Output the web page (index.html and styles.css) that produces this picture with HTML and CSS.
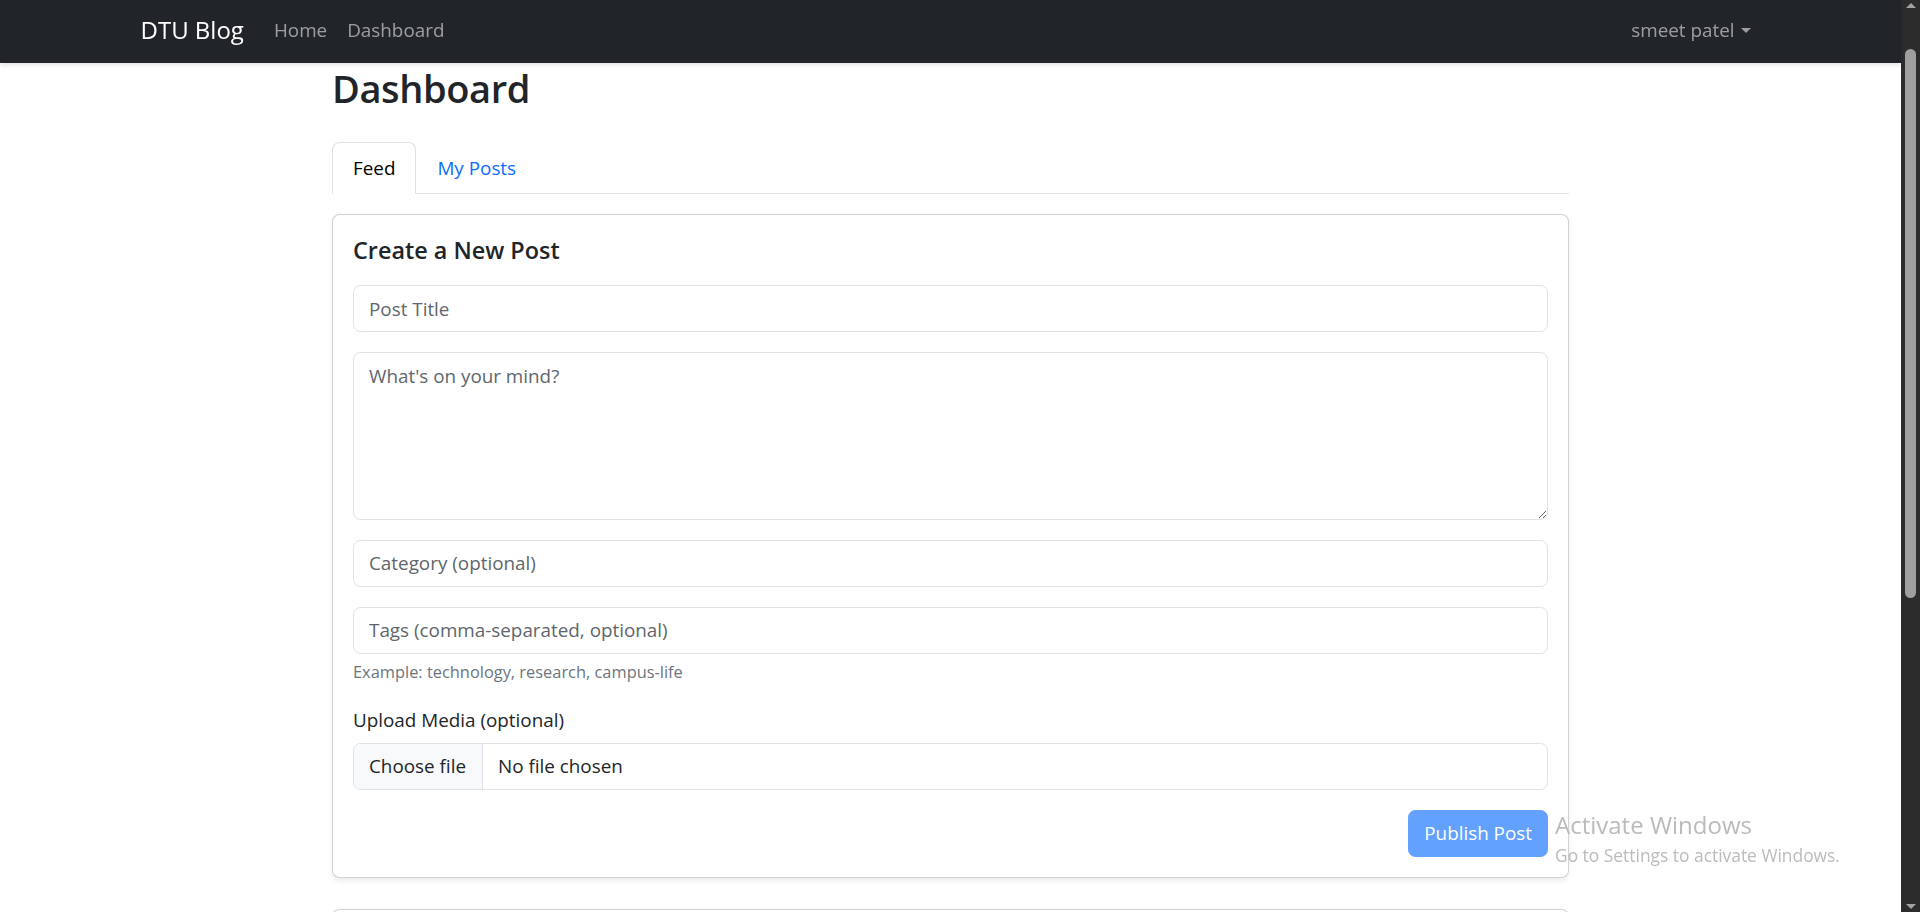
FILE: index.html
```html
<!DOCTYPE html>
<html lang="en">
<head>
<meta charset="utf-8">
<title>Dashboard - DTU Blog</title>
<link rel="stylesheet" href="styles.css">
</head>
<body>
<nav class="navbar">
  <div class="nav-container">
    <a class="brand" href="#">DTU Blog</a>
    <div class="nav-links">
      <a class="nav-link" href="#">Home</a>
      <a class="nav-link" href="#">Dashboard</a>
    </div>
    <a class="user" href="#">smeet patel<span class="caret"></span></a>
  </div>
</nav>

<main class="main">
  <h1 class="page-title">Dashboard</h1>
  <ul class="tabs">
    <li><a class="tab active" href="#">Feed</a></li>
    <li><a class="tab" href="#">My Posts</a></li>
  </ul>

  <section class="card">
    <h5 class="card-title">Create a New Post</h5>
    <div class="group"><input class="field" type="text" placeholder="Post Title"></div>
    <div class="group"><textarea class="field area" placeholder="What's on your mind?"></textarea></div>
    <div class="group"><input class="field" type="text" placeholder="Category (optional)"></div>
    <div class="group">
      <input class="field" type="text" placeholder="Tags (comma-separated, optional)">
      <div class="help">Example: technology, research, campus-life</div>
    </div>
    <div class="group">
      <label class="label">Upload Media (optional)</label>
      <div class="file"><span class="file-btn">Choose file</span><span class="file-name">No file chosen</span></div>
    </div>
    <div class="actions"><button class="btn" type="button">Publish Post</button></div>
  </section>

  <section class="card card-next"></section>
</main>

<div class="watermark">
  <div class="wm-title">Activate Windows</div>
  <div class="wm-sub">Go to Settings to activate Windows.</div>
</div>

<div class="scrollbar">
  <span class="sb-up"></span>
  <span class="sb-thumb"></span>
  <span class="sb-down"></span>
</div>
</body>
</html>
```

FILE: styles.css
```css
* { box-sizing: border-box; }
html { overflow: hidden; }
body {
  margin: 0;
  padding-right: 19px;
  font-family: "Open Sans", "Noto Sans", sans-serif;
  font-size: 18.85px;
  line-height: 30px;
  color: #212529;
  background: #fff;
}
a { text-decoration: none; }

.navbar {
  position: relative;
  z-index: 1;
  height: 63px;
  padding-bottom: 4px;
  display: flex;
  background: #212529;
  box-shadow: 0 2px 5px rgba(0, 0, 0, 0.12);
}
.nav-container {
  width: 1620px;
  margin: 0 auto;
  display: flex;
  align-items: center;
}
.brand {
  font-size: 24px;
  line-height: 37px;
  color: #fff;
  margin-right: 20px;
}
.nav-links { display: flex; flex: 1; }
.nav-link, .user {
  color: rgba(255, 255, 255, 0.55);
  padding: 0 10px;
}
.caret {
  display: inline-block;
  margin-left: 6px;
  vertical-align: 4px;
  border-top: 5px solid;
  border-left: 5px solid transparent;
  border-right: 5px solid transparent;
}

.main { width: 1237px; margin: 0 auto; }
.page-title {
  font-size: 38px;
  font-weight: 600;
  line-height: 46px;
  letter-spacing: -0.4px;
  margin: 2px 0 31px;
}
.tabs {
  display: flex;
  list-style: none;
  margin: 0;
  padding: 0;
  border-bottom: 1px solid #dee2e6;
}
.tab {
  display: block;
  padding: 10px 20px;
  border: 1px solid transparent;
  border-radius: 7.5px 7.5px 0 0;
  margin-bottom: -1px;
  color: #0d6efd;
}
.tab.active {
  color: #000;
  background: #fff;
  border-color: #dee2e6 #dee2e6 #fff;
}

.card {
  margin-top: 20px;
  padding: 20px;
  border: 1px solid rgba(0, 0, 0, 0.175);
  border-radius: 7.5px;
  background: #fff;
  box-shadow: 0 2.5px 5px rgba(0, 0, 0, 0.075);
}
.card-title {
  font-size: 23.4px;
  font-weight: 600;
  line-height: 30px;
  margin: 0 0 20px;
}
.group { margin-bottom: 20px; }
.field {
  display: block;
  width: 100%;
  height: 47px;
  padding: 7.5px 15px;
  font: inherit;
  line-height: 30px;
  color: #212529;
  background: #fff;
  border: 1px solid #dee2e6;
  border-radius: 7.5px;
  outline: none;
}
.field::placeholder { color: #60666c; opacity: 1; }
.area { height: 167.5px; resize: vertical; }
.help {
  margin-top: 5px;
  font-size: 16.4px;
  line-height: 26px;
  color: #6c757d;
}
.label { display: block; margin-bottom: 8px; }
.file {
  display: flex;
  height: 47px;
  border: 1px solid #dee2e6;
  border-radius: 7.5px;
  overflow: hidden;
}
.file-btn {
  display: flex;
  align-items: center;
  padding: 0 16px 0 15px;
  margin-right: 15px;
  background: #f8f9fa;
  border-right: 1px solid #dee2e6;
}
.file-name { display: flex; align-items: center; }
.actions { display: flex; justify-content: flex-end; }
.btn {
  height: 47px;
  padding: 0 15px;
  font: inherit;
  color: #fff;
  background: rgb(98, 161, 254);
  border: 1px solid rgb(98, 161, 254);
  border-radius: 7.5px;
}
.card-next { margin-top: 31px; height: 220px; }

.watermark {
  position: fixed;
  left: 1555px;
  top: 810px;
  color: #bbbbbb;
  pointer-events: none;
}
.wm-title { font-size: 24px; line-height: 30px; }
.wm-sub { font-size: 17.4px; line-height: 22px; margin-top: 4px; }

.scrollbar {
  position: fixed;
  top: 0;
  right: 0;
  width: 19px;
  height: 100%;
  background: #2c2c2c;
  display: flex;
  flex-direction: column;
  align-items: center;
}
.sb-up, .sb-down {
  width: 0;
  height: 0;
  border-left: 5px solid transparent;
  border-right: 5px solid transparent;
}
.sb-up { margin-top: 3px; border-bottom: 5px solid #a3a3a3; }
.sb-thumb {
  width: 11px;
  height: 549px;
  margin-top: 41px;
  background: #9f9f9f;
  border-radius: 6px;
}
.sb-down { margin-top: auto; margin-bottom: 3px; border-top: 5px solid #a3a3a3; }
```
